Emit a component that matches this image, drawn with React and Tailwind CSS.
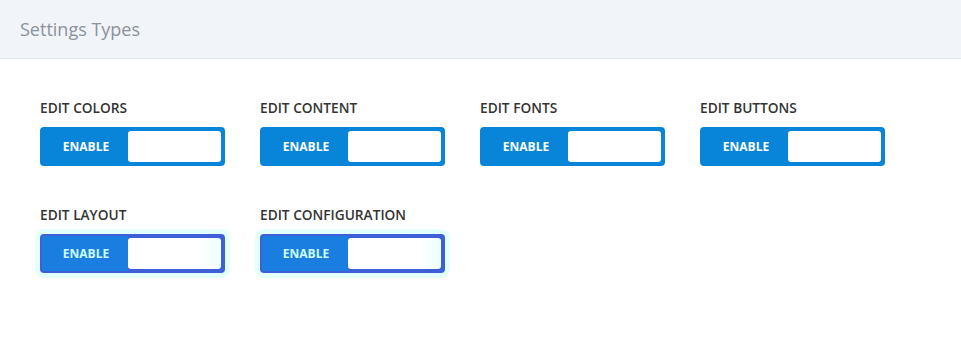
import React from 'react';

const items = [
  { label: 'EDIT COLORS' },
  { label: 'EDIT CONTENT' },
  { label: 'EDIT FONTS' },
  { label: 'EDIT BUTTONS' },
  { label: 'EDIT LAYOUT', glitch: true },
  { label: 'EDIT CONFIGURATION', glitch: true },
];

function Toggle({ glitch }) {
  if (glitch) {
    return (
      <div className="w-[185px] h-[39px] rounded-[4px] bg-[#3f5fd8] p-[4px] flex shadow-[0_0_0_5px_#e3fffe]">
        <div className="w-[86px] -ml-[2px] pl-[2px] flex items-center justify-center bg-[#1a7ee0] rounded-l-[3px] -my-[2px]">
          <span className="text-[12px] font-bold text-[#ccfffd]">ENABLE</span>
        </div>
        <div className="flex-1 rounded-[3px] bg-gradient-to-r from-white from-[80%] to-[#eaffff]" />
      </div>
    );
  }
  return (
    <div className="w-[185px] h-[39px] rounded-[4px] bg-[#0885d8] p-[4px] flex">
      <div className="w-[84px] flex items-center justify-center">
        <span className="text-[12px] font-bold text-white">ENABLE</span>
      </div>
      <div className="flex-1 rounded-[3px] bg-white" />
    </div>
  );
}

export default function App() {
  return (
    <div className="w-[961px] h-[352px] bg-white font-['Open_Sans',sans-serif]">
      <div className="h-[59px] bg-[#f1f4f9] border-b border-[#e2e6eb] flex items-center px-[20px]">
        <span className="text-[18px] text-[#8a929b]">Settings Types</span>
      </div>
      <div className="pl-[40px] pt-[40px] grid grid-cols-[220px_220px_220px_220px] gap-y-[40px]">
        {items.map(item => (
          <div key={item.label} className="flex flex-col gap-[10px]">
            <div className="h-[18px] leading-[18px] text-[13.7px] font-semibold text-[#333333]">{item.label}</div>
            <Toggle glitch={item.glitch} />
          </div>
        ))}
      </div>
    </div>
  );
}
